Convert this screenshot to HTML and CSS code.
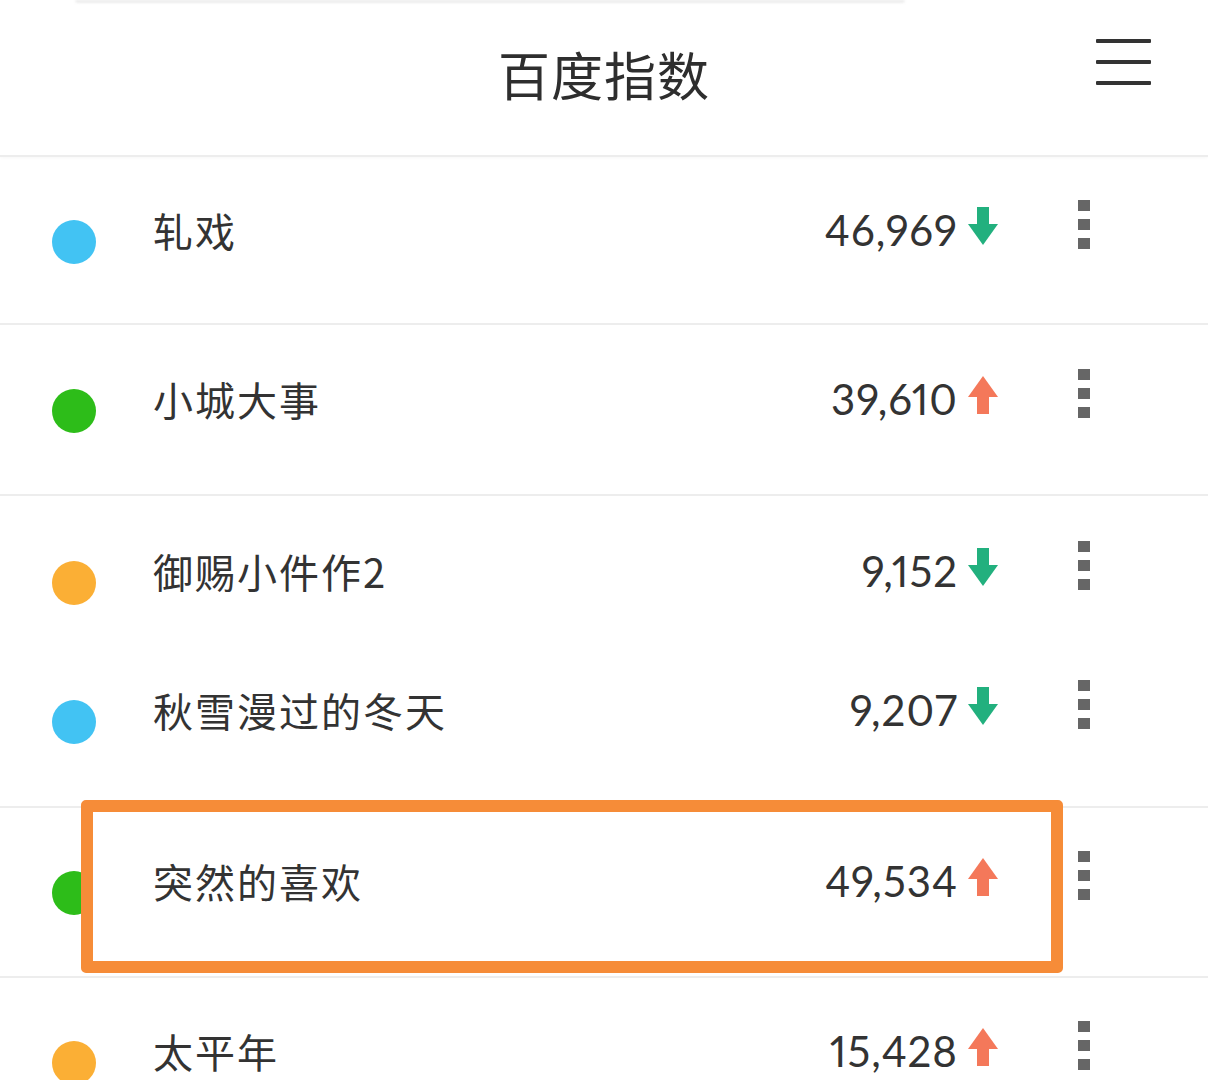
FILE: index.html
```html
<!DOCTYPE html>
<html lang="zh-CN">
<head>
<meta charset="utf-8">
<title>百度指数</title>
<link rel="stylesheet" href="styles.css">
</head>
<body>
<div class="page">
  <header class="header">
    <div></div>
    <h1 class="title">百度指数</h1>
    <div class="menu" aria-label="menu"><span></span><span></span><span></span></div>
  </header>

  <ul class="list">
    <li class="row r1">
      <span class="dot blue"></span>
      <span class="name">轧戏</span>
      <span class="num">46,969</span>
      <svg class="arrow" viewBox="0 0 30 38"><rect x="9" y="0" width="12" height="20" fill="#22b07e"/><polygon points="0,17 30,17 15,38" fill="#22b07e"/></svg>
      <span class="kebab"><i></i><i></i><i></i></span>
    </li>
    <li class="row r2">
      <span class="dot green"></span>
      <span class="name">小城大事</span>
      <span class="num">39,610</span>
      <svg class="arrow" viewBox="0 0 30 38"><polygon points="15,0 30,21 0,21" fill="#f4785a"/><rect x="9" y="18" width="12" height="20" fill="#f4785a"/></svg>
      <span class="kebab"><i></i><i></i><i></i></span>
    </li>
    <li class="row r3 noline">
      <span class="dot orange"></span>
      <span class="name">御赐小件作2</span>
      <span class="num">9,152</span>
      <svg class="arrow" viewBox="0 0 30 38"><rect x="9" y="0" width="12" height="20" fill="#22b07e"/><polygon points="0,17 30,17 15,38" fill="#22b07e"/></svg>
      <span class="kebab"><i></i><i></i><i></i></span>
    </li>
    <li class="row r4">
      <span class="dot blue"></span>
      <span class="name">秋雪漫过的冬天</span>
      <span class="num">9,207</span>
      <svg class="arrow" viewBox="0 0 30 38"><rect x="9" y="0" width="12" height="20" fill="#22b07e"/><polygon points="0,17 30,17 15,38" fill="#22b07e"/></svg>
      <span class="kebab"><i></i><i></i><i></i></span>
    </li>
    <li class="row r5">
      <span class="dot green covered"></span>
      <span class="name">突然的喜欢</span>
      <span class="num">49,534</span>
      <svg class="arrow" viewBox="0 0 30 38"><polygon points="15,0 30,21 0,21" fill="#f4785a"/><rect x="9" y="18" width="12" height="20" fill="#f4785a"/></svg>
      <span class="kebab"><i></i><i></i><i></i></span>
      <div class="highlight"></div>
    </li>
    <li class="row r6">
      <span class="dot orange"></span>
      <span class="name">太平年</span>
      <span class="num">15,428</span>
      <svg class="arrow" viewBox="0 0 30 38"><polygon points="15,0 30,21 0,21" fill="#f4785a"/><rect x="9" y="18" width="12" height="20" fill="#f4785a"/></svg>
      <span class="kebab"><i></i><i></i><i></i></span>
    </li>
  </ul>
</div>
</body>
</html>
```

FILE: styles.css
```css
* { box-sizing: border-box; }
html, body { margin: 0; padding: 0; background: #fff; }
body {
  width: 1208px;
  height: 1080px;
  overflow: hidden;
  font-family: "Noto Sans CJK SC", "Noto Sans", sans-serif;
  color: #333;
}
.page { width: 1208px; }

.header {
  position: relative;
  height: 157px;
  display: grid;
  grid-template-columns: 1fr auto 1fr;
  align-items: start;
  border-bottom: 2px solid #ededed;
  box-shadow: 0 1px 3px rgba(0,0,0,0.03);
}
.header::before {
  content: "";
  position: absolute;
  left: 75px;
  top: 0;
  width: 830px;
  height: 3px;
  background: #ececec;
  border-radius: 0 0 4px 4px;
  filter: blur(1px);
}
.title {
  margin: 43px 0 0;
  font-size: 52px;
  line-height: 62px;
  font-weight: 400;
  letter-spacing: 1px;
  color: #2e2e2e;
}
.menu {
  justify-self: end;
  margin: 39px 57px 0 0;
  width: 55px;
  display: flex;
  flex-direction: column;
  gap: 17px;
}
.menu span {
  display: block;
  height: 4px;
  background: #333;
  border-radius: 1px;
}

.list { list-style: none; margin: 0; padding: 0; }
.row {
  position: relative;
  display: flex;
  align-items: flex-start;
  padding-top: 53px;
  border-bottom: 2px solid #ededed;
}
.row.noline { border-bottom: none; }
.r1 { height: 168px; }
.r2 { height: 171px; padding-top: 54px; }
.r3 { height: 142px; padding-top: 55px; }
.r4 { height: 170px; padding-top: 52px; }
.r5 { height: 170px; padding-top: 53px; }
.r6 { height: 110px; padding-top: 53px; }

.dot {
  flex: none;
  width: 44px;
  height: 44px;
  border-radius: 50%;
  margin: 10px 57px 0 52px;
}
.dot.blue { background: #42c3f3; }
.dot.green { background: #2dbd19; }
.dot.orange { background: #fbaf35; }
.dot.covered { clip-path: inset(0 12px 0 0); }

.name {
  flex: 1;
  font-size: 40px;
  line-height: 40px;
  color: #333;
  letter-spacing: 2px;
}
.num {
  font-family: "Lato", "Noto Sans", sans-serif;
  font-size: 42px;
  line-height: 40px;
  color: #333;
  font-variant-numeric: proportional-nums;
  letter-spacing: 1px;
}
.arrow {
  flex: none;
  width: 30px;
  height: 38px;
  margin: -3px 0 0 10px;
}
.kebab {
  flex: none;
  display: flex;
  flex-direction: column;
  gap: 8px;
  margin: -10px 118px 0 80px;
}
.kebab i {
  display: block;
  width: 12px;
  height: 11px;
  background: #666;
}

.highlight {
  position: absolute;
  left: 81px;
  top: -8px;
  width: 982px;
  height: 173px;
  border: 12px solid #f68c38;
  border-radius: 5px;
  pointer-events: none;
}
```
